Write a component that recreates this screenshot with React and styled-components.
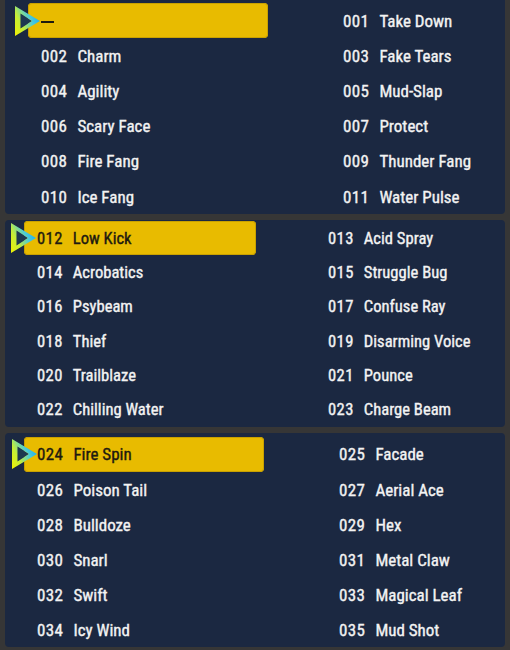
import React from "react";
import styled, { createGlobalStyle } from "styled-components";

const GlobalStyle = createGlobalStyle`
  html, body { margin: 0; padding: 0; background: #363636; overflow: hidden; }
  body { font-family: Roboto, "Open Sans", sans-serif; font-stretch: condensed; }
`;

const Page = styled.div`
  display: flex;
  flex-direction: column;
  gap: 6px;
  padding: 0 5px 2px 5px;
  width: 510px;
  box-sizing: border-box;
`;

const Panel = styled.section`
  background: #1b2841;
  border-radius: ${(p) => (p.$first ? "0 0 4px 4px" : "4px")};
  display: grid;
  grid-template-columns: ${(p) => p.$col}px minmax(0, 1fr);
  grid-auto-rows: ${(p) => p.$row}px;
  column-gap: ${(p) => p.$gap}px;
  padding: ${(p) => p.$top}px 0 0 ${(p) => p.$left}px;
  overflow: hidden;
`;

const Cell = styled.div`
  position: relative;
  display: flex;
  align-items: center;
  gap: 10px;
  padding-left: 13px;
  box-sizing: border-box;
  border-radius: 4px;
  font-size: ${(p) => p.$size}px;
  font-weight: 400;
  white-space: nowrap;
  color: ${(p) => (p.$active ? "#1d1a10" : "#f3f3f3")};
  background: ${(p) => (p.$active ? "#e8bb00" : "transparent")};
  box-shadow: ${(p) => (p.$active ? "inset 0 0 0 1px #c9a100" : "none")};
  -webkit-text-stroke: 0.35px currentColor;
`;

const Num = styled.span`
  letter-spacing: 0.4px;
`;

const Name = styled.span``;

const Dash = styled.span`
  display: inline-block;
  width: 13px;
  height: 2px;
  margin-top: 2px;
  background: #1d1a10;
  color: transparent;
  font-size: 1px;
  overflow: hidden;
`;

const Cursor = styled.svg`
  position: absolute;
  left: ${(p) => p.$x}px;
  top: 50%;
  transform: translateY(-50%);
  width: 25px;
  height: 30px;
`;

function Arrow({ id, x }) {
  return (
    <Cursor $x={x} viewBox="0 0 25 30">
      <defs>
        <linearGradient id={id} x1="0" y1="1" x2="1" y2="0.4">
          <stop offset="0" stopColor="#f2f000" />
          <stop offset="0.35" stopColor="#c4ee38" />
          <stop offset="0.7" stopColor="#4ccbd8" />
          <stop offset="1" stopColor="#1aaef6" />
        </linearGradient>
      </defs>
      <path d="M5.5 7.5 L17 15 L5.5 22.5 Z" fill="#1d3850" />
      <path
        d="M0 0 L25 15 L0 30 Z M5.5 7.5 L5.5 22.5 L17 15 Z"
        fill={`url(#${id})`}
        fillRule="evenodd"
      />
    </Cursor>
  );
}

const panels = [
  {
    first: true,
    col: 240,
    gap: 62,
    left: 23,
    top: 3,
    row: 35.2,
    size: 17,
    arrowX: -13,
    items: [
      ["", "—"],
      ["001", "Take Down"],
      ["002", "Charm"],
      ["003", "Fake Tears"],
      ["004", "Agility"],
      ["005", "Mud-Slap"],
      ["006", "Scary Face"],
      ["007", "Protect"],
      ["008", "Fire Fang"],
      ["009", "Thunder Fang"],
      ["010", "Ice Fang"],
      ["011", "Water Pulse"],
    ],
  },
  {
    col: 232,
    gap: 59,
    left: 19,
    top: 1,
    row: 34.3,
    size: 16.6,
    arrowX: -13,
    items: [
      ["012", "Low Kick"],
      ["013", "Acid Spray"],
      ["014", "Acrobatics"],
      ["015", "Struggle Bug"],
      ["016", "Psybeam"],
      ["017", "Confuse Ray"],
      ["018", "Thief"],
      ["019", "Disarming Voice"],
      ["020", "Trailblaze"],
      ["021", "Pounce"],
      ["022", "Chilling Water"],
      ["023", "Charge Beam"],
    ],
  },
  {
    col: 240,
    gap: 62,
    left: 19,
    top: 4,
    row: 35.1,
    size: 17,
    arrowX: -12,
    items: [
      ["024", "Fire Spin"],
      ["025", "Facade"],
      ["026", "Poison Tail"],
      ["027", "Aerial Ace"],
      ["028", "Bulldoze"],
      ["029", "Hex"],
      ["030", "Snarl"],
      ["031", "Metal Claw"],
      ["032", "Swift"],
      ["033", "Magical Leaf"],
      ["034", "Icy Wind"],
      ["035", "Mud Shot"],
    ],
  },
];

export default function App() {
  return (
    <>
      <GlobalStyle />
      <Page>
        {panels.map((p, pi) => (
          <Panel
            key={pi}
            $first={p.first}
            $col={p.col}
            $gap={p.gap}
            $left={p.left}
            $top={p.top}
            $row={p.row}
          >
            {p.items.map(([num, name], i) => (
              <Cell key={i} $active={i === 0} $size={p.size}>
                {i === 0 && <Arrow id={`grad${pi}`} x={p.arrowX} />}
                {num && <Num>{num}</Num>}
                {num ? <Name>{name}</Name> : <Dash>{name}</Dash>}
              </Cell>
            ))}
          </Panel>
        ))}
      </Page>
    </>
  );
}
